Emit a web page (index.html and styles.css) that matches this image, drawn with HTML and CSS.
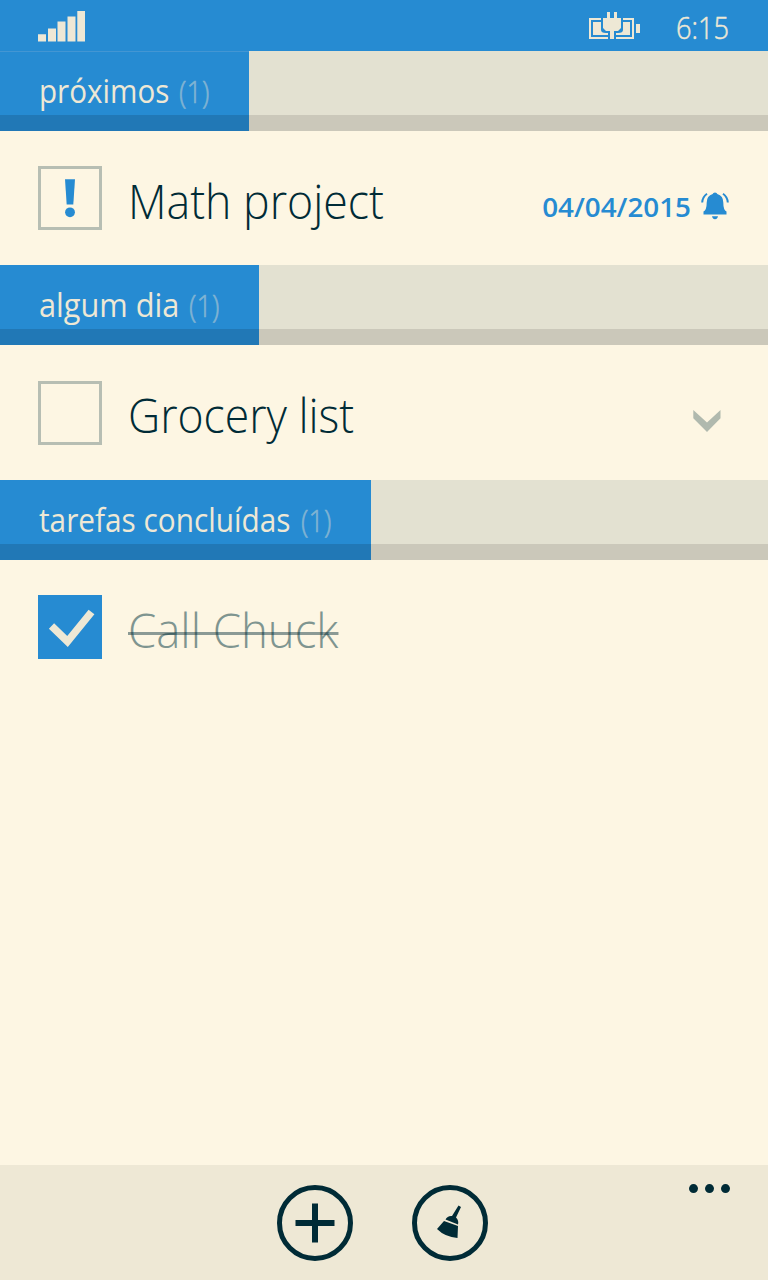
FILE: index.html
```html
<!DOCTYPE html>
<html lang="pt">
<head>
<meta charset="utf-8">
<title>Tarefas</title>
<link rel="stylesheet" href="styles.css">
</head>
<body>
<div class="phone">
  <header class="status">
    <svg class="signal" width="48" height="31" viewBox="0 0 48 31"><path d="M0 23.300h8V30.500H0zM10 17.500h8V30.500H10zM19.500 10.500h8V30.500h-8zM29.500 5.500H37.500V30.500h-8zM39.300 0H47v30.500h-7.700z"/></svg>
    <svg class="battery" width="52" height="28" viewBox="0 0 52 28"><path d="M0 6h12v2H2v17h17v2H0zM4 10h8v8q0 3 5 3h2v2H4zM18 0h3v6h4V0h3v6h4v10l-3 3h-4v8h-4v-8h-4l-3-3V6h4zM34 6h11v21H27v-2h16V8h-9zM34 10h7v13H27v-2h2q5 0 5-3zM47 12h4v9h-4z"/></svg>
    <span class="clock">6:15</span>
  </header>
  <main class="tasks">
    <section>
      <h2 class="group"><span class="tab tab-next"><span class="name name-next">próximos</span><span class="count">(1)</span></span></h2>
      <div class="task">
        <span class="box"><svg width="64" height="64" viewBox="0 0 64 64"><path d="M27 13.200h10L35.300 38.500h-6.600z"/><circle cx="32" cy="46.300" r="4.900"/></svg></span>
        <span class="title title-math">Math project</span>
        <span class="due">04/04/2015</span>
        <svg class="bell" width="28" height="28" viewBox="0 0 28 28"><path d="M14 .5q2 0 2.300 1.500Q22.300 3.700 22.300 10.500q0 7.500 3.200 9v3H2.500v-3q3.200-1.500 3.200-9 0-6.800 6-8.500Q12 .5 14 .5zM11 24.300h6q-.6 3-3 3t-3-3z"/><path class="ring" d="M1.200 10.500Q1.500 5 6 1.800M26.800 10.500Q26.500 5 22 1.800"/></svg>
      </div>
    </section>
    <section>
      <h2 class="group"><span class="tab tab-someday"><span class="name name-someday">algum dia</span><span class="count">(1)</span></span></h2>
      <div class="task">
        <span class="box"></span>
        <span class="title title-grocery">Grocery list</span>
        <svg class="chevron" width="28" height="22" viewBox="0 0 28 22"><path d="M.3 0L14 12.500 27.500 0v8.200L14 22 .3 8.200z"/></svg>
      </div>
    </section>
    <section>
      <h2 class="group"><span class="tab tab-done"><span class="name name-done">tarefas concluídas</span><span class="count">(1)</span></span></h2>
      <div class="task">
        <span class="box checked"><svg width="64" height="64" viewBox="0 0 64 64"><path d="M13.500 31L29.500 46.500 53.500 17"/></svg></span>
        <span class="title title-call">Call Chuck</span>
      </div>
    </section>
  </main>
  <footer class="appbar">
    <svg class="action" width="76" height="76" viewBox="0 0 76 76"><circle cx="38" cy="38" r="35.500"/><path d="M35 18.500h6v16.500h16.500v6H41v16.500h-6V41H18.500v-6H35z"/></svg>
    <svg class="action" width="76" height="76" viewBox="0 0 76 76"><circle cx="38" cy="38" r="35.500"/><path d="M46.500 20.500L49 22 44 32.500q3 3 2 7L33.500 34.500q2-4 6.500-3.500zM32 36L46 41 45.500 53Q33 52 25 44z"/></svg>
    <svg class="more" width="42" height="10" viewBox="0 0 42 10"><circle cx="4.500" cy="4.600" r="4.500"/><circle cx="20.500" cy="4.600" r="4.500"/><circle cx="36.500" cy="4.600" r="4.500"/></svg>
  </footer>
</div>
</body>
</html>
```
FILE: styles.css
```css
* { box-sizing: border-box; }
body {
  margin: 0;
  background: #fdf6e3;
  color: #002b36;
  font-family: "Open Sans", "Noto Sans", sans-serif;
}
.phone { width: 768px; height: 1280px; display: flex; flex-direction: column; overflow: hidden; }
.status { height: 51px; flex: none; display: flex; align-items: flex-start; padding: 0 0 0 38px; background: #268bd2; color: #eee8d5; }
.status svg { fill: #eee8d5; flex: none; }
.signal { margin-top: 11px; }
.battery { margin: 12px 0 0 503px; }
.clock { margin-left: 35px; margin-top: 5px; font-size: 32px; line-height: 44px; font-weight: 300; white-space: nowrap; -webkit-text-stroke: .5px #eee8d5; transform: scaleX(.85); transform-origin: 0 50%; }
.tasks { flex: 1; }
.group { margin: 0; height: 80px; display: flex; background: linear-gradient(#e3e1d1 64px, #cbc8ba 64px); font-size: 32px; font-weight: 400; line-height: 44px; }
.tab { display: flex; height: 80px; padding: 18px 0 0 38.500px; background: linear-gradient(#268bd2 64px, #2178b6 64px); color: #eee8d5; white-space: nowrap; }
.tab-next { width: 249.400px; box-shadow: inset 0 1px #4396d3; }
.tab-someday { width: 259px; }
.tab-done { width: 371px; }
.name { flex: none; transform-origin: 0 50%; }
.name-next { width: 140px; transform: scaleX(.925); }
.name-someday { width: 150px; transform: scaleX(.96); }
.name-done { width: 262px; transform: scaleX(.93); }
.count { color: #82b4d3; font-weight: 300; -webkit-text-stroke: .6px #82b4d3; transform: scaleX(.85); transform-origin: 0 50%; }
.task { height: 134.400px; display: flex; align-items: flex-start; padding: 35.400px 39px 0 38px; }
.box { width: 64px; height: 64px; flex: none; border: 3px solid #b7beb3; display: flex; align-items: center; justify-content: center; }
.box svg { flex: none; fill: #268bd2; }
.box.checked { border: 0; background: #268bd2; }
.box.checked svg { fill: none; stroke: #eee8d5; stroke-width: 7.500; }
.title { margin-left: 26px; margin-top: 1.200px; font-size: 48px; line-height: 66px; font-weight: 300; white-space: nowrap; transform-origin: 0 50%; }
.title-math { transform: scaleX(.93); }
.title-grocery { transform: scaleX(.927); }
.title-call { position: relative; margin-top: 2px; color: #7f9590; transform: scaleX(.948); }
.title-call::after { content: ""; position: absolute; left: 0; right: 0; top: 35px; height: 3px; background: rgba(0, 43, 54, .45); }
.due { margin-left: auto; margin-top: 20px; font-size: 27.800px; line-height: 40px; font-weight: 600; color: #268bd2; white-space: nowrap; }
.bell { margin: 25.500px 0 0 9.500px; fill: #268bd2; flex: none; }
.task .bell { margin-right: .5px; }
.ring { fill: none; stroke: #268bd2; stroke-width: 2; }
.chevron { margin: 29px 8px 0 auto; fill: #b0b9ae; }
.appbar { height: 115px; flex: none; display: flex; align-items: flex-start; padding: 19.500px 37px 0 277.400px; background: #eee8d5; }
.action { fill: #002b36; margin-right: 59px; flex: none; }
.action circle { fill: none; stroke: #002b36; stroke-width: 5; }
.more { margin-left: auto; fill: #002b36; margin-top: -1px; flex: none; }
```
